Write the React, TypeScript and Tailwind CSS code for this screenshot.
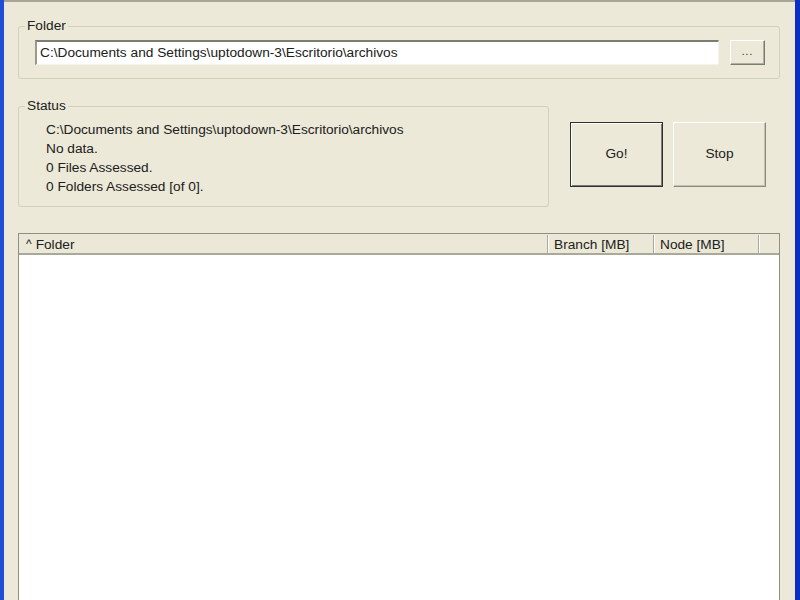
export default function App() {
  const font = { fontFamily: '"Liberation Sans", Arial, sans-serif' }
  return (
    <div className="w-[800px] h-[600px] flex overflow-hidden text-[13.7px] text-[#202020]" style={font}>
      {/* window frame left */}
      <div className="w-[4px] h-full bg-[#1f4fd6]" />
      <div className="flex-1 flex flex-col bg-[#ece9d8] border-t-2 border-[#a7a696] pl-[14px] pr-[15px] min-w-0">
        {/* Folder group */}
        <fieldset className="mt-[16px] border border-[#d0d0bf] rounded-[3px] p-0 m-0">
          <legend className="ml-[6px] px-[2px] leading-[16px] text-[#202020]">Folder</legend>
          <div className="flex items-center gap-[11px] pl-[16px] pr-[14px] pt-[6px] pb-[13px]">
            <div className="flex-1 h-[25px] bg-white border-t-2 border-l-2 border-t-[#7c7c72] border-l-[#9a998c] border-b border-r border-b-[#f4f3ee] border-r-[#f4f3ee] flex items-center pl-[3px] whitespace-nowrap overflow-hidden">
              C:\Documents and Settings\uptodown-3\Escritorio\archivos
            </div>
            <button className="w-[35px] h-[25px] bg-[#ece9d8] border border-t-white border-l-white border-b-[#7d7c70] border-r-[#7d7c70] shadow-[inset_-1px_-1px_0_#b0aea0] flex items-center justify-center text-[10px] tracking-[1px] pb-[2px]">
              ...
            </button>
          </div>
        </fieldset>

        {/* Status + buttons */}
        <div className="flex items-start mt-[19px]">
          <fieldset className="w-[531px] border border-[#d0d0bf] rounded-[3px] p-0 m-0">
            <legend className="ml-[6px] px-[2px] leading-[16px]">Status</legend>
            <div className="pl-[27px] pt-[6px] pb-[10px] leading-[19px] whitespace-nowrap">
              <div>C:\Documents and Settings\uptodown-3\Escritorio\archivos</div>
              <div>No data.</div>
              <div>0 Files Assessed.</div>
              <div>0 Folders Assessed [of 0].</div>
            </div>
          </fieldset>
          <button className="ml-[21px] mt-[24px] w-[93px] h-[65px] bg-[#ece9d8] border border-[#303030] shadow-[inset_1px_1px_0_#ffffff,inset_-1px_-1px_0_#7d7c70] flex items-center justify-center">
            Go!
          </button>
          <button className="ml-[10px] mt-[24px] w-[93px] h-[65px] bg-[#ece9d8] border border-t-white border-l-white border-b-[#8a897c] border-r-[#8a897c] shadow-[inset_-1px_-1px_0_#c4c2b3] flex items-center justify-center">
            Stop
          </button>
        </div>

        {/* List view */}
        <div className="mt-[26px] flex-1 flex flex-col border border-[#8f8f84] border-b-0 bg-white">
          <div className="h-[21px] flex bg-[#ebe8d7] border-b-2 border-[#a9a899] leading-[19px] pt-[1px]">
            <div className="w-[529px] pl-[7px] border-r border-[#a9a899] flex items-center gap-[4px]">
              <span className="text-[12px]">^</span>
              <span>Folder</span>
            </div>
            <div className="w-[106px] pl-[5px] border-r border-[#a9a899] border-l border-l-white">Branch [MB]</div>
            <div className="w-[105px] pl-[5px] border-r border-[#a9a899] border-l border-l-white">Node [MB]</div>
            <div className="flex-1 border-l border-l-white" />
          </div>
          <div className="flex-1 bg-white" />
        </div>
      </div>
      <div className="w-[5px] h-full bg-[#0b31c4]" />
    </div>
  )
}
